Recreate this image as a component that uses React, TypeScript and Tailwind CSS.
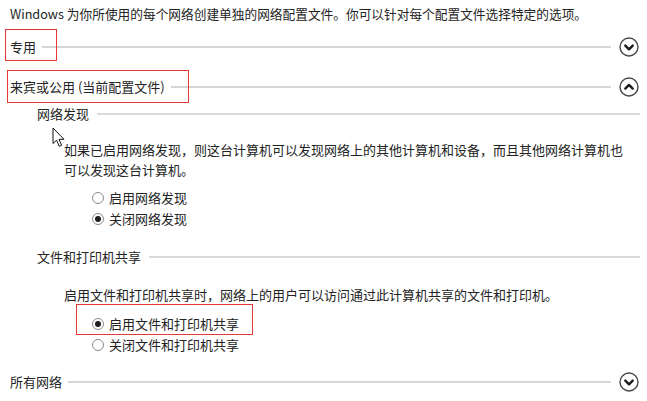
import React from 'react';

type RadioProps = { label: string; checked?: boolean };

const Radio = ({ label, checked }: RadioProps) => (
  <div className="flex items-center h-[21px] pl-[92px]">
    <span className="flex items-center justify-center w-[12px] h-[12px] rounded-full border border-[#8a8a8a] bg-white">
      {checked && <span className="w-[6px] h-[6px] rounded-full bg-[#1f1f1f]" />}
    </span>
    <span className="ml-[5px]">{label}</span>
  </div>
);

const Chevron = ({ up }: { up?: boolean }) => (
  <svg width="20" height="20" viewBox="0 0 20 20" className="shrink-0">
    <circle cx="10" cy="10" r="9" fill="white" stroke="#4a4a4a" strokeWidth="1.4" />
    <path
      d={up ? 'M6.3 11.6 L10 7.9 L13.7 11.6' : 'M6.3 8.6 L10 12.3 L13.7 8.6'}
      fill="none"
      stroke="#1c1c1c"
      strokeWidth="2.4"
      strokeLinecap="round"
      strokeLinejoin="round"
    />
  </svg>
);

const SectionHeader = ({ title, up, className }: { title: string; up?: boolean; className: string }) => (
  <div className={`flex items-center h-[20px] pl-[10px] pr-[8px] ${className}`}>
    <span className="whitespace-nowrap">{title}</span>
    <div className="flex-1 h-[1.5px] bg-[#d6d6d6] ml-[6px] mr-[8px]" />
    <Chevron up={up} />
  </div>
);

const SubHeader = ({ title, className }: { title: string; className: string }) => (
  <div className={`flex items-center h-[20px] pl-[37px] pr-[7px] ${className}`}>
    <span className="whitespace-nowrap">{title}</span>
    <div className="flex-1 h-[1.5px] bg-[#dadada] ml-[8px]" />
  </div>
);

export default function App() {
  return (
    <div className="relative w-[647px] h-[401px] overflow-hidden bg-white text-[13px] text-[#232323] font-['Microsoft_YaHei','Noto_Sans_CJK_SC',sans-serif]">
      {/* 说明 */}
      <p className="pl-[10px] pt-[5px] leading-[18px] text-[12.7px] whitespace-nowrap">
        Windows 为你所使用的每个网络创建单独的网络配置文件。你可以针对每个配置文件选择特定的选项。
      </p>

      <SectionHeader title="专用" className="mt-[14px]" />
      <SectionHeader title="来宾或公用 (当前配置文件)" up className="mt-[20px]" />

      {/* 网络发现 */}
      <SubHeader title="网络发现" className="mt-[7px]" />
      <p className="mt-[16px] pl-[64px] w-[632px] leading-[20px]">
        如果已启用网络发现，则这台计算机可以发现网络上的其他计算机和设备，而且其他网络计算机也可以发现这台计算机。
      </p>
      <div className="mt-[7px]">
        <Radio label="启用网络发现" />
        <Radio label="关闭网络发现" checked />
      </div>

      {/* 文件和打印机共享 */}
      <SubHeader title="文件和打印机共享" className="mt-[18px]" />
      <p className="mt-[18px] pl-[64px] leading-[20px] whitespace-nowrap">
        启用文件和打印机共享时，网络上的用户可以访问通过此计算机共享的文件和打印机。
      </p>
      <div className="mt-[8px]">
        <Radio label="启用文件和打印机共享" checked />
        <Radio label="关闭文件和打印机共享" />
      </div>

      <SectionHeader title="所有网络" className="mt-[17px]" />

      {/* 标注框 */}
      <div className="absolute left-[5px] top-[29px] w-[52px] h-[32px] border border-[#e53935]" />
      <div className="absolute left-[7px] top-[70px] w-[182px] h-[33px] border border-[#e53935]" />
      <div className="absolute left-[76px] top-[304px] w-[177px] h-[31px] border border-[#e53935]" />

      {/* 鼠标指针 */}
      <svg className="absolute left-[52px] top-[127px]" width="14" height="21" viewBox="0 0 14 21">
        <path
          d="M1 1 L1 16.5 L4.6 13.2 L7.2 19.3 L9.6 18.3 L7 12.3 L12 12.3 Z"
          fill="white"
          stroke="#111"
          strokeWidth="1"
          strokeLinejoin="round"
        />
      </svg>
    </div>
  );
}
